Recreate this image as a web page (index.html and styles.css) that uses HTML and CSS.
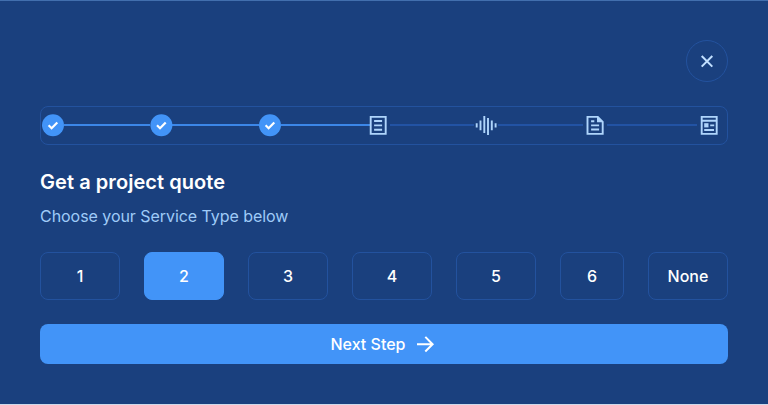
FILE: index.html
```html
<!DOCTYPE html>
<html lang="en">
<head>
<meta charset="utf-8">
<title>Get a project quote</title>
<link rel="stylesheet" href="styles.css">
</head>
<body>
<main class="dialog">
  <button class="close" aria-label="Close">
    <svg width="24" height="24" viewBox="0 0 24 24" fill="none" stroke="currentColor" stroke-width="2"><path d="M6.7 7 17.3 17.6M17.3 7 6.7 17.6"/></svg>
  </button>
  <div class="stepper">
    <svg class="step" viewBox="0 0 24 24"><circle cx="12" cy="12.2" r="11" fill="#4294f8"/><path d="m7.6 12.3 3 2.9 5.7-5.8" fill="none" stroke="#fff" stroke-width="2.2"/></svg>
    <span class="line done"></span>
    <svg class="step" viewBox="0 0 24 24"><circle cx="12.4" cy="12.2" r="11" fill="#4294f8"/><path d="m8 12.3 3 2.9 5.7-5.8" fill="none" stroke="#fff" stroke-width="2.2"/></svg>
    <span class="line done"></span>
    <svg class="step" viewBox="0 0 24 24"><circle cx="12" cy="12.2" r="11" fill="#4294f8"/><path d="m7.6 12.3 3 2.9 5.7-5.8" fill="none" stroke="#fff" stroke-width="2.2"/></svg>
    <span class="line done reach"></span>
    <svg class="step" viewBox="0 0 24 24" fill="none" stroke="#afd5fc" stroke-width="1.9"><path d="M4.7 3.9h15v17h-15zM8.1 8h8M8.1 12.4h8M8.1 16.7h8"/></svg>
    <span class="line"></span>
    <svg class="step" viewBox="0 0 24 24" fill="none" stroke="#afd5fc" stroke-width="1.9"><path d="M2.7 10.2v4.3M6.5 7.5v9.7M10.3 3v17M14 5v17M17.8 7.5v9.7M21.6 10.2v4.3"/></svg>
    <span class="line"></span>
    <svg class="step" viewBox="0 0 24 24" fill="none" stroke="#afd5fc" stroke-width="1.9"><path d="M4.5 3.9h10.3l4.9 5v12H4.5z"/><path d="M14 3.1v6.2h6z" fill="#afd5fc" stroke="none"/><path d="M8.1 8.3h3.2M8.1 12.4h8M8.1 16.5h8"/></svg>
    <span class="line last"></span>
    <svg class="step" viewBox="0 0 24 24" fill="none" stroke="#afd5fc" stroke-width="1.9"><path d="M4.7 3.9h15v17h-15zM4.5 7.7h15.2M13.2 12.4h4M7.2 17h9.8"/><path d="M7.2 10.2h4.3v4.2H7.2z" fill="#afd5fc" stroke="none"/></svg>
  </div>
  <h1 class="title">Get a project quote</h1>
  <p class="subtitle">Choose your Service Type below</p>
  <div class="options">
    <button class="option">1</button>
    <button class="option selected">2</button>
    <button class="option">3</button>
    <button class="option">4</button>
    <button class="option">5</button>
    <button class="option">6</button>
    <button class="option">None</button>
  </div>
  <button class="next">Next Step
    <svg width="24" height="24" viewBox="0 0 24 24" fill="none" stroke="currentColor" stroke-width="2"><path d="M4 12.2h15M12.3 4.9l7.3 7.3-7.3 7.3"/></svg>
  </button>
</main>
</body>
</html>
```
FILE: styles.css
```css
* { box-sizing: border-box; }

body {
  margin: 0;
  background: #1a407e;
  font-family: Inter, "Liberation Sans", sans-serif;
}

button {
  font: inherit;
  padding: 0;
  color: #fff;
  background: none;
}

.dialog {
  height: 405px;
  display: flex;
  flex-direction: column;
  padding: 39px 40px 0;
  border-top: 1px solid #426fae;
  border-bottom: 1px solid #cfdaeb;
}

.close {
  align-self: flex-end;
  display: grid;
  place-items: center;
  width: 42px;
  height: 42px;
  border: 1px solid #23529e;
  border-radius: 50%;
  color: #c2e0ff;
}

.stepper {
  display: flex;
  align-items: center;
  height: 39px;
  margin-top: 24px;
  padding: 0 6px 1px 0;
  border: 1px solid #23529e;
  border-radius: 8px;
}

.step {
  position: relative;
  flex: none;
  width: 24px;
  height: 24px;
}

.line {
  flex: 1 1 0;
  height: 2px;
  background: #2253a4;
}

.line.done {
  background: #3c87e8;
  margin: 0 -1px;
  flex-basis: 2px;
}

.line.reach {
  margin-right: -4px;
  flex-basis: 5px;
}

.line.last { flex-basis: 6px; }

.title {
  margin: 25px 0 0;
  font-size: 20px;
  line-height: 24px;
  font-weight: 600;
  letter-spacing: 0.06px;
  color: #fff;
}

.subtitle {
  margin: 12px 0 0;
  font-size: 16px;
  line-height: 20px;
  letter-spacing: -0.05px;
  color: #9fcbf8;
}

.options {
  display: grid;
  grid-template-columns: repeat(5, 80px) 64px 80px;
  gap: 24px;
  margin-top: 26px;
}

.option {
  height: 48px;
  border: 1px solid #23529e;
  border-radius: 8px;
  font-size: 16px;
  font-weight: 500;
}

.option.selected {
  background: #4294f8;
  border-color: #4294f8;
}

.next {
  display: flex;
  align-items: center;
  justify-content: center;
  gap: 8px;
  height: 40px;
  margin-top: 24px;
  border: 0;
  border-radius: 8px;
  background: #4294f8;
  font-size: 16px;
  font-weight: 500;
}
```
